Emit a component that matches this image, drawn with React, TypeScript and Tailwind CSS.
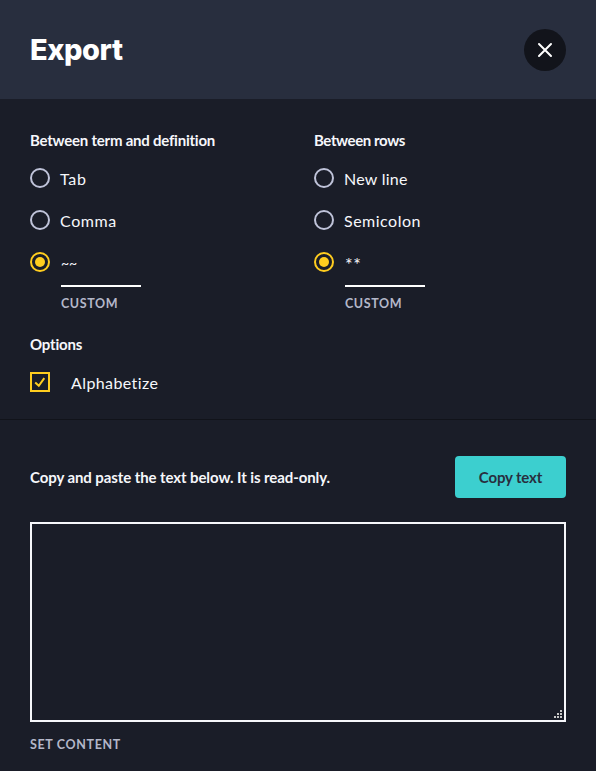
import type { ReactNode } from "react";

function Radio({ checked = false }: { checked?: boolean }) {
  return (
    <span
      role="radio"
      aria-checked={checked}
      className={
        checked
          ? "flex size-5 shrink-0 items-center justify-center rounded-full border-2 border-[#ffcd1f]"
          : "flex size-5 shrink-0 items-center justify-center rounded-full border-2 border-[#bfc3d9]"
      }
    >
      {checked && <span className="size-2.5 rounded-full bg-[#ffcd1f]" />}
    </span>
  );
}

function Option({ children, spacing }: { children: ReactNode; spacing: string }) {
  return (
    <div className="mb-[22px] flex h-5 gap-2.5">
      <Radio />
      <span className={`mt-px text-base leading-5 whitespace-nowrap ${spacing}`}>{children}</span>
    </div>
  );
}

function Custom({ value, look }: { value: string; look: string }) {
  return (
    <div className="flex gap-[11px]">
      <Radio checked />
      <div className="w-20">
        <div className="h-[35px] border-b-2 border-white">
          <span className={`block leading-5 ${look}`}>{value}</span>
        </div>
        <div className="mt-[7px] mb-px text-[12.5px] leading-5 font-bold tracking-[0.6px] text-[#b4b7c9]">CUSTOM</div>
      </div>
    </div>
  );
}

export default function App() {
  return (
    <main className="h-[771px] w-[596px] overflow-hidden bg-[#1a1d28] font-['Lato','Liberation_Sans',sans-serif] text-[#f6f7fb]">
      <header className="flex h-[99px] items-start justify-between bg-[#282e3e] px-[30px] pt-[29px]">
        <h1 className="font-['Inter','Liberation_Sans',sans-serif] text-[29px] leading-[42px] font-extrabold tracking-[-0.45px] text-white">Export</h1>
        <button aria-label="Close" className="flex size-[42px] items-center justify-center rounded-full bg-[#12141b]">
          <svg width="16" height="16" viewBox="0 0 16 16" fill="none" stroke="white" strokeWidth="2" strokeLinecap="round">
            <path d="M2 2 14 14M14 2 2 14" />
          </svg>
        </button>
      </header>
      <section className="h-[321px] border-b border-[#11131a] px-[30px] pt-[31px]">
        <div className="flex">
          <div className="w-[284px]">
            <h2 className="mb-[18px] text-[15px] leading-5 font-bold tracking-[-0.23px] whitespace-nowrap">Between term and definition</h2>
            <Option spacing="tracking-[0.7px]">Tab</Option>
            <Option spacing="tracking-[0.6px]">Comma</Option>
            <Custom value="~~" look="pt-px text-[14px]" />
          </div>
          <div>
            <h2 className="mb-[18px] text-[15px] leading-5 font-bold tracking-[-0.4px] whitespace-nowrap">Between rows</h2>
            <Option spacing="tracking-[0.25px]">New line</Option>
            <Option spacing="tracking-[0.5px]">Semicolon</Option>
            <Custom value="**" look="pt-0.5 text-[18px] tracking-[0.5px]" />
          </div>
        </div>
        <h2 className="mt-[19px] text-[15px] leading-5 font-bold tracking-[-0.2px]">Options</h2>
        <div className="mt-[18px] flex h-5 gap-[21px]">
          <span role="checkbox" aria-checked="true" className="flex size-5 items-center justify-center border-2 border-[#ffcd1f]">
            <svg width="16" height="16" viewBox="0 0 16 16" fill="none" stroke="#ffcd1f" strokeWidth="2">
              <path d="M3.2 8.5 6.8 11.8 12.3 4.2" />
            </svg>
          </span>
          <span className="mt-px text-base leading-5 tracking-[0.4px]">Alphabetize</span>
        </div>
      </section>
      <section className="px-[30px] pt-9">
        <div className="flex h-[42px] items-center justify-between">
          <p className="text-[15px] leading-5 font-bold tracking-[-0.09px] whitespace-nowrap">Copy and paste the text below. It is read-only.</p>
          <button className="h-[42px] w-[111px] rounded bg-[#3ccfcf] text-[15px] font-bold tracking-[-0.15px] whitespace-nowrap text-[#282e3e]">Copy text</button>
        </div>
        <div role="textbox" aria-readonly="true" className="mt-6 flex h-[200px] items-end justify-end border-2 border-[#f6f7fb] p-0.5">
          <svg width="8" height="8" viewBox="0 0 8 8" fill="#c8c8c8">
            <path d="M6 0h2v2H6zM3 3h2v2H3zM6 3h2v2H6zM0 6h2v2H0zM3 6h2v2H3zM6 6h2v2H6z" />
          </svg>
        </div>
        <div className="mt-[13px] text-[12.5px] leading-5 font-bold tracking-[0.65px] text-[#b4b7c9]">SET CONTENT</div>
      </section>
    </main>
  );
}
